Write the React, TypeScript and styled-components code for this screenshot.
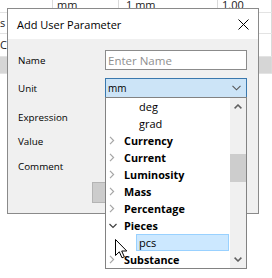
import styled, { createGlobalStyle } from 'styled-components';

const GlobalStyle = createGlobalStyle`
  html, body {
    margin: 0;
    padding: 0;
    background: #ffffff;
  }
  body {
    font-family: "Open Sans", "Noto Sans", sans-serif;
    color: #000000;
  }
`;

type TreeNode = { label: string; level: 0 | 1; open?: boolean; selected?: boolean };

const nodes: TreeNode[] = [
  { label: 'deg', level: 1 },
  { label: 'grad', level: 1 },
  { label: 'Currency', level: 0 },
  { label: 'Current', level: 0 },
  { label: 'Luminosity', level: 0 },
  { label: 'Mass', level: 0 },
  { label: 'Percentage', level: 0 },
  { label: 'Pieces', level: 0, open: true },
  { label: 'pcs', level: 1, selected: true },
  { label: 'Substance', level: 0 },
];

const labels = [
  { text: 'Name', gap: 0 },
  { text: 'Unit', gap: 8 },
  { text: 'Expression', gap: 9 },
  { text: 'Value', gap: 4 },
  { text: 'Comment', gap: 5 },
];

export default function App() {
  return (
    <Page>
      <GlobalStyle />
      <Sheet>
        <SheetRow $h={12} $align="flex-end">
          <Cell $pad={4} />
          <Cell $pad={4}>mm</Cell>
          <Cell $pad={7}>1 mm</Cell>
          <Cell $pad={4}>1.00</Cell>
        </SheetRow>
        <SheetRow $h={20}>
          <Cell $pad={0}>s</Cell>
          <Cell $pad={4} />
          <Cell $pad={4} />
          <Cell $pad={4} />
        </SheetRow>
        <SheetRow $h={22}>
          <Cell $pad={0}>C</Cell>
          <Cell $pad={4} />
          <Cell $pad={4} />
          <Cell $pad={4} />
        </SheetRow>
        <SheetRow $h={16} $shade>
          <Cell $pad={4} />
          <Cell $pad={4} />
          <Cell $pad={4} />
          <Cell $pad={4} />
        </SheetRow>
      </Sheet>

      <Dialog>
        <TitleBar>
          <Title>Add User Parameter</Title>
          <CloseButton>
            <svg width="11" height="11" viewBox="0 0 11 11">
              <path d="M0.5 0.5 L10.5 10.5 M10.5 0.5 L0.5 10.5" stroke="#000" strokeWidth="1" fill="none" />
            </svg>
          </CloseButton>
        </TitleBar>
        <Body>
          {labels.map((l) => (
            <FormRow key={l.text} $gap={l.gap}>
              <FieldLabel>{l.text}</FieldLabel>
              {l.text === 'Name' && <TextInput>Enter Name</TextInput>}
              {l.text === 'Unit' && (
                <ComboWrap>
                  <Combo>
                    <span>mm</span>
                    <svg width="9" height="6" viewBox="0 0 9 6">
                      <polyline points="0.5,0.8 4.5,4.8 8.5,0.8" stroke="#555" strokeWidth="1.1" fill="none" />
                    </svg>
                  </Combo>
                  <DropList>
                    <Items>
                      {nodes.map((n) => (
                        <TreeRow key={n.label}>
                          {n.level === 0 ? (
                            <>
                              <Twisty>
                                {n.open ? (
                                  <svg width="8" height="6" viewBox="0 0 8 6">
                                    <polyline points="0.5,1 4,4.5 7.5,1" stroke="#404040" strokeWidth="1.2" fill="none" />
                                  </svg>
                                ) : (
                                  <svg width="6" height="9" viewBox="0 0 6 9">
                                    <polyline points="1,0.8 4.6,4.5 1,8.2" stroke="#a6a6a6" strokeWidth="1.2" fill="none" />
                                  </svg>
                                )}
                              </Twisty>
                              <GroupText>{n.label}</GroupText>
                            </>
                          ) : (
                            <LeafText $selected={n.selected}>{n.label}</LeafText>
                          )}
                        </TreeRow>
                      ))}
                    </Items>
                    <ScrollBar>
                      <ScrollArrow>
                        <svg width="8" height="5" viewBox="0 0 8 5">
                          <polyline points="0.6,4.4 4,1 7.4,4.4" stroke="#606060" strokeWidth="1.5" fill="none" />
                        </svg>
                      </ScrollArrow>
                      <Track>
                        <Thumb />
                      </Track>
                      <ScrollArrow>
                        <svg width="8" height="5" viewBox="0 0 8 5">
                          <polyline points="0.6,0.6 4,4 7.4,0.6" stroke="#606060" strokeWidth="1.5" fill="none" />
                        </svg>
                      </ScrollArrow>
                    </ScrollBar>
                  </DropList>
                </ComboWrap>
              )}
            </FormRow>
          ))}
          <ButtonRow>
            {/* OK / Cancel sit behind the open list, so no caption shows */}
            <PushButton $default />
            <PushButton />
          </ButtonRow>
        </Body>
      </Dialog>

      <Pointer>
        <svg width="13" height="20" viewBox="0 0 13 20">
          <path
            d="M0.5 0.5 L0.5 16.5 L4.3 12.8 L7 18.8 L9.3 17.8 L6.7 12 L11.8 12 Z"
            fill="#ffffff"
            stroke="#000000"
            strokeWidth="1"
            strokeLinejoin="round"
          />
        </svg>
      </Pointer>
    </Page>
  );
}

const Page = styled.div`
  position: relative;
  width: 272px;
  height: 278px;
  overflow: hidden;
  background: #ffffff;
`;

const Sheet = styled.div`
  display: flex;
  flex-direction: column;
`;

const SheetRow = styled.div<{ $h: number; $shade?: boolean; $align?: string }>`
  display: grid;
  grid-template-columns: 53px 66px 99px 1fr;
  height: ${(p) => p.$h}px;
  align-items: ${(p) => p.$align ?? 'center'};
  border-bottom: 1px solid #e3e3e3;
  background: ${(p) => (p.$shade ? '#d6d6d6' : '#ffffff')};
  font-size: 11px;
  line-height: 13px;
`;

const Cell = styled.div<{ $pad: number }>`
  height: 100%;
  display: flex;
  align-items: inherit;
  padding-left: ${(p) => p.$pad}px;
  padding-bottom: 1px;
  border-right: 1px solid #dadada;
  color: #1a1a1a;
  overflow: hidden;
  white-space: nowrap;
  box-sizing: border-box;
`;

const Dialog = styled.div`
  position: absolute;
  left: 7px;
  top: 8px;
  width: 252px;
  height: 206px;
  box-sizing: border-box;
  border: 1px solid #8a8a8a;
  display: flex;
  flex-direction: column;
  background: #f0f0f0;
`;

const TitleBar = styled.div`
  height: 30px;
  flex: none;
  background: #ffffff;
  display: flex;
  align-items: center;
  justify-content: space-between;
  padding-left: 9px;
`;

const Title = styled.div`
  font-size: 11px;
  color: #000000;
`;

const CloseButton = styled.div`
  display: flex;
  align-items: center;
  padding-right: 9px;
`;

const Body = styled.div`
  flex: 1;
  display: flex;
  flex-direction: column;
  padding: 11px 11px 10px 10px;
`;

const FormRow = styled.div<{ $gap: number }>`
  display: grid;
  grid-template-columns: 87px 142px;
  align-items: center;
  height: 20px;
  margin-top: ${(p) => p.$gap}px;
`;

const FieldLabel = styled.div`
  font-size: 9.8px;
  color: #000000;
`;

const TextInput = styled.div`
  height: 20px;
  box-sizing: border-box;
  border: 1px solid #8b8b8b;
  background: #ffffff;
  display: flex;
  align-items: center;
  padding-left: 2px;
  font-size: 11.5px;
  color: #8f8f8f;
`;

const ComboWrap = styled.div`
  position: relative;
  height: 20px;
`;

const Combo = styled.div`
  height: 20px;
  box-sizing: border-box;
  border: 1px solid #3a78ad;
  background: #cce4f7;
  display: flex;
  align-items: center;
  justify-content: space-between;
  padding: 0 5px 0 2px;
  font-size: 10px;
`;

const DropList = styled.div`
  position: absolute;
  left: 0;
  top: 19px;
  width: 142px;
  height: 172px;
  box-sizing: border-box;
  border: 1px solid #828282;
  background: #ffffff;
  display: flex;
  overflow: hidden;
  z-index: 2;
`;

const Items = styled.div`
  flex: 1;
  display: flex;
  flex-direction: column;
`;

const TreeRow = styled.div`
  height: 17px;
  flex: none;
  display: flex;
  align-items: center;
  font-size: 11px;
`;

const Twisty = styled.div`
  width: 18px;
  display: flex;
  align-items: center;
  padding-left: 3px;
  box-sizing: border-box;
`;

const GroupText = styled.span`
  font-weight: 700;
  font-size: 10.8px;
`;

const LeafText = styled.div<{ $selected?: boolean }>`
  flex: 1;
  height: 17px;
  box-sizing: border-box;
  margin: 0 1px 0 30px;
  padding-left: 2px;
  display: flex;
  align-items: center;
  border: 1px solid ${(p) => (p.$selected ? '#99d1ff' : 'transparent')};
  background: ${(p) => (p.$selected ? '#cce8ff' : 'transparent')};
`;

const ScrollBar = styled.div`
  width: 16px;
  flex: none;
  background: #f0f0f0;
  display: flex;
  flex-direction: column;
`;

const ScrollArrow = styled.div`
  height: 17px;
  flex: none;
  display: flex;
  align-items: center;
  justify-content: center;
`;

const Track = styled.div`
  flex: 1;
`;

const Thumb = styled.div`
  margin-top: 39px;
  height: 28px;
  background: #cdcdcd;
`;

const ButtonRow = styled.div`
  display: flex;
  justify-content: flex-end;
  gap: 5px;
  margin-top: 6px;
`;

const PushButton = styled.div<{ $default?: boolean }>`
  width: 75px;
  height: 21px;
  box-sizing: border-box;
  border: 1px solid #b4b4b4;
  background: ${(p) => (p.$default ? '#cccccc' : '#e1e1e1')};
`;

const Pointer = styled.div`
  position: absolute;
  left: 115px;
  top: 239px;
  width: 13px;
  height: 20px;
  z-index: 5;
`;
